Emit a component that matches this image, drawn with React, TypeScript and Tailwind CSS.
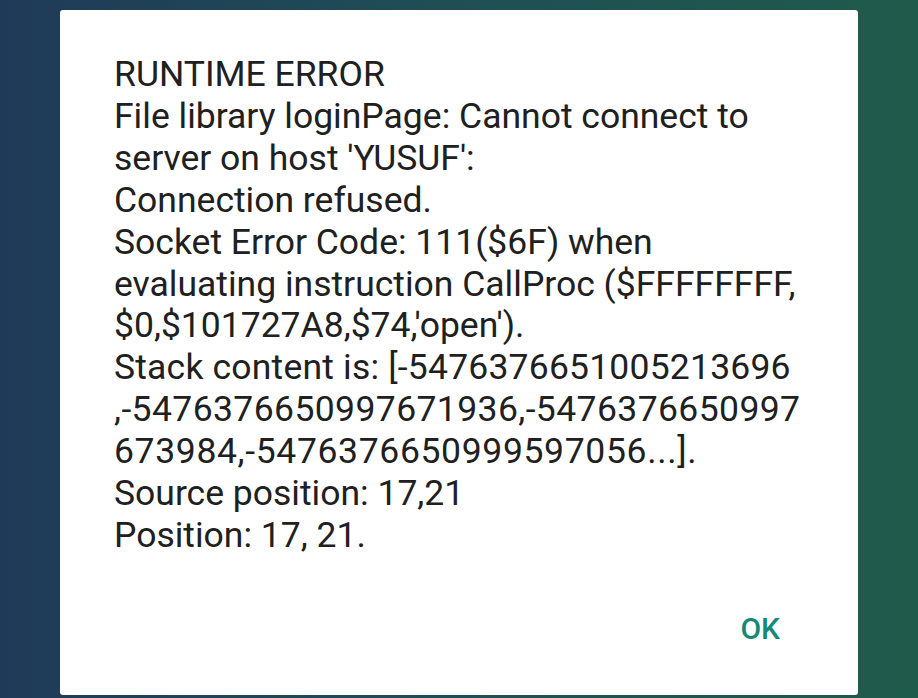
import React from 'react';

const LINES: { text: string; track?: string }[] = [
  { text: 'RUNTIME ERROR' },
  { text: 'File library loginPage: Cannot connect to' },
  { text: "server on host 'YUSUF':" },
  { text: 'Connection refused.' },
  { text: 'Socket Error Code: 111($6F) when' },
  { text: 'evaluating instruction CallProc ($FFFFFFFF,' },
  { text: "$0,$101727A8,$74,'open')." },
  { text: 'Stack content is: [-5476376651005213696', track: 'whitespace-pre tracking-[0.2px]' },
  { text: ',-5476376650997671936,-5476376650997', track: 'whitespace-pre tracking-[0.4px]' },
  { text: '673984,-5476376650999597056...].', track: 'whitespace-pre tracking-[0.65px]' },
  { text: 'Source position: 17,21' },
  { text: 'Position: 17, 21.' },
];

const App: React.FC = () => {
  return (
    <div className="w-[918px] h-[698px] overflow-hidden bg-gradient-to-r from-[#1f3a58] via-[#1f4f55] to-[#1f5b4b] flex flex-col">
      {/* dialog */}
      <div className="mt-[10px] ml-[60px] w-[798px] h-[685px] bg-white rounded-[3px] flex flex-col font-['Roboto',sans-serif]">
        <div className="pt-[44px] pl-[54px] text-[35.5px] leading-[41.9px] text-[#202020]">
          {LINES.map((line, i) => (
            <div key={i} className={line.track ?? 'whitespace-pre'}>
              {line.text}
            </div>
          ))}
        </div>
        <div className="flex justify-end pr-[78px] mt-[54px]">
          <button className="text-[30px] leading-[36px] font-medium text-[#148a76]">OK</button>
        </div>
      </div>
    </div>
  );
};

export default App;
